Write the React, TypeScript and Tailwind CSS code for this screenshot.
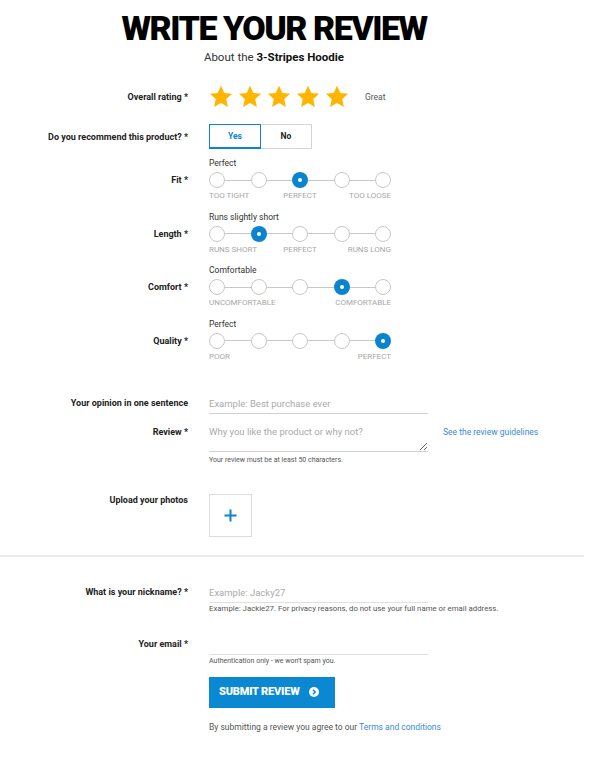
import React from 'react';

const Star: React.FC = () => (
  <svg width="24" height="23" viewBox="0 0 24 23">
    <path
      d="M12 0.8l3.3 7.2 7.8 0.8-5.9 5.3 1.7 7.8L12 17.9l-6.9 4 1.7-7.8L0.9 8.8l7.8-0.8z"
      fill="#ffb500"
    />
  </svg>
);

type ScaleProps = {
  label: string;
  value: string;
  selected: number;
  marks: string[];
};

const Scale: React.FC<ScaleProps> = ({ label, value, selected, marks }) => (
  <div className="flex items-start">
    <div className="w-[188px] pt-[15px] text-right text-[9px] font-bold leading-[16px] text-[#222]">
      {label} *
    </div>
    <div className="ml-[21px] w-[182px]">
      <div className="text-[8.5px] leading-[12px] text-[#333]">{value}</div>
      <div className="mt-[3px] flex h-[16px] items-center">
        {[0, 1, 2, 3, 4].map((i) => (
          <React.Fragment key={i}>
            {i > 0 && <div className="h-px flex-1 bg-[#c8c8c8]" />}
            {i === selected ? (
              <div className="flex h-[16px] w-[16px] items-center justify-center rounded-full bg-[#0b84cf]">
                <div className="h-[4px] w-[4px] rounded-full bg-white" />
              </div>
            ) : (
              <div className="h-[16px] w-[16px] rounded-full border-[1.5px] border-[#c8c8c8]" />
            )}
          </React.Fragment>
        ))}
      </div>
      {marks.length === 3 ? (
        <div className="mt-[2px] grid grid-cols-3 text-[8px] leading-[12px] text-[#a8a8a8]">
          <span className="text-left">{marks[0]}</span>
          <span className="text-center">{marks[1]}</span>
          <span className="text-right">{marks[2]}</span>
        </div>
      ) : (
        <div className="mt-[2px] flex justify-between text-[8px] leading-[12px] text-[#a8a8a8]">
          <span>{marks[0]}</span>
          <span>{marks[1]}</span>
        </div>
      )}
    </div>
  </div>
);

const App: React.FC = () => {
  return (
    <div className="w-[584px] bg-white pb-6 font-['Roboto',sans-serif] text-[#222]">
      {/* Header */}
      <div className="w-[548px] pt-[8px] text-center">
        <h1 className="text-[34px] font-black leading-[40px] tracking-[-1.5px] text-black">
          WRITE YOUR REVIEW
        </h1>
        <p className="mt-[1px] text-[11.5px] leading-[16px] text-[#333]">
          About the <span className="font-bold text-[#111]">3-Stripes Hoodie</span>
        </p>
      </div>

      {/* Overall rating */}
      <div className="mt-[19px] flex h-[24px] items-center">
        <div className="w-[188px] pt-[3px] text-right text-[9px] font-bold text-[#222]">Overall rating *</div>
        <div className="ml-[21px] flex items-center gap-[5px]">
          {[0, 1, 2, 3, 4].map((i) => (
            <Star key={i} />
          ))}
          <span className="ml-[11px] pt-[3px] text-[8.5px] text-[#555]">Great</span>
        </div>
      </div>

      {/* Recommend */}
      <div className="mt-[16px] flex h-[25px] items-center">
        <div className="w-[188px] pt-[2px] text-right text-[9px] font-bold text-[#222]">
          Do you recommend this product? *
        </div>
        <div className="ml-[21px] flex h-[25px] text-[8.5px] font-bold">
          <button className="w-[52px] border border-b-2 border-[#0b84cf] text-[#0b84cf]">Yes</button>
          <button className="w-[51px] border border-l-0 border-[#d4d4d4] text-[#222]">No</button>
        </div>
      </div>

      {/* Scales */}
      <div className="mt-[8px] flex flex-col gap-[8.5px]">
        <Scale label="Fit" value="Perfect" selected={2} marks={['TOO TIGHT', 'PERFECT', 'TOO LOOSE']} />
        <Scale label="Length" value="Runs slightly short" selected={1} marks={['RUNS SHORT', 'PERFECT', 'RUNS LONG']} />
        <Scale label="Comfort" value="Comfortable" selected={3} marks={['UNCOMFORTABLE', 'COMFORTABLE']} />
        <Scale label="Quality" value="Perfect" selected={4} marks={['POOR', 'PERFECT']} />
      </div>

      {/* Opinion */}
      <div className="mt-[31px] flex h-[20px] items-center">
        <div className="w-[188px] text-right text-[9px] font-bold text-[#222]">Your opinion in one sentence</div>
        <input
          className="ml-[21px] block h-[20px] w-[219px] border-b border-[#d0d0d0] text-[9.5px] outline-none placeholder:text-[#aaa]"
          placeholder="Example: Best purchase ever"
        />
      </div>

      {/* Review */}
      <div className="mt-[10px] flex items-start">
        <div className="w-[188px] pt-[2px] text-right text-[9px] font-bold leading-[12px] text-[#222]">Review *</div>
        <div className="ml-[21px] w-[219px]">
          <textarea
            className="block h-[28px] w-[219px] border-b border-[#d0d0d0] pt-[2px] text-[9.5px] leading-[12px] outline-none placeholder:text-[#aaa]"
            placeholder="Why you like the product or why not?"
          />
          <div className="mt-[3px] text-[7px] leading-[10px] text-[#555]">
            Your review must be at least 50 characters.
          </div>
        </div>
        <a className="ml-[15px] pt-[2px] text-[8.5px] leading-[12px] text-[#3a8bd0]">See the review guidelines</a>
      </div>

      {/* Upload */}
      <div className="mt-[29px] flex items-start">
        <div className="w-[188px] text-right text-[9px] font-bold leading-[12px] text-[#222]">Upload your photos</div>
        <div className="ml-[21px] flex h-[43px] w-[43px] items-center justify-center border border-[#dcdcdc]">
          <svg width="13" height="13" viewBox="0 0 13 13">
            <path d="M6.5 0.5v12M0.5 6.5h12" stroke="#0b84cf" strokeWidth="2" />
          </svg>
        </div>
      </div>

      <div className="mt-[18px] h-[2px] w-full bg-[#ebebeb]" />

      {/* Nickname */}
      <div className="mt-[26px] flex items-start">
        <div className="flex h-[20px] w-[188px] items-center justify-end text-[9px] font-bold text-[#222]">
          What is your nickname? *
        </div>
        <div className="ml-[21px]">
          <input
            className="block h-[20px] w-[219px] border-b border-[#e0e0e0] text-[9.5px] outline-none placeholder:text-[#aaa]"
            placeholder="Example: Jacky27"
          />
          <div className="mt-[1px] whitespace-nowrap text-[7.8px] leading-[10px] text-[#555]">
            Example: Jackie27. For privacy reasons, do not use your full name or email address.
          </div>
        </div>
      </div>

      {/* Email */}
      <div className="mt-[21px] flex items-start">
        <div className="flex h-[20px] w-[188px] items-center justify-end text-[9px] font-bold text-[#222]">
          Your email *
        </div>
        <div className="ml-[21px]">
          <input className="block h-[20px] w-[219px] border-b border-[#e0e0e0] text-[9.5px] outline-none" />
          <div className="mt-[1px] text-[7px] leading-[10px] text-[#555]">Authentication only - we won't spam you.</div>
        </div>
      </div>

      {/* Submit */}
      <div className="ml-[209px] mt-[11px]">
        <button className="flex h-[31px] w-[126px] items-center gap-[9px] bg-[#0a89d2] pl-[10px] text-[11px] font-black tracking-[-0.2px] text-white">
          SUBMIT REVIEW
          <svg width="10" height="10" viewBox="0 0 10 10">
            <circle cx="5" cy="5" r="5" fill="white" />
            <path d="M4 2.8l2.2 2.2L4 7.2" stroke="#0a89d2" strokeWidth="1.5" fill="none" />
          </svg>
        </button>
        <p className="mt-[13px] text-[8.5px] leading-[12px] text-[#555]">
          By submitting a review you agree to our <a className="text-[#3a8bd0]">Terms and conditions</a>
        </p>
      </div>
    </div>
  );
};

export default App;
